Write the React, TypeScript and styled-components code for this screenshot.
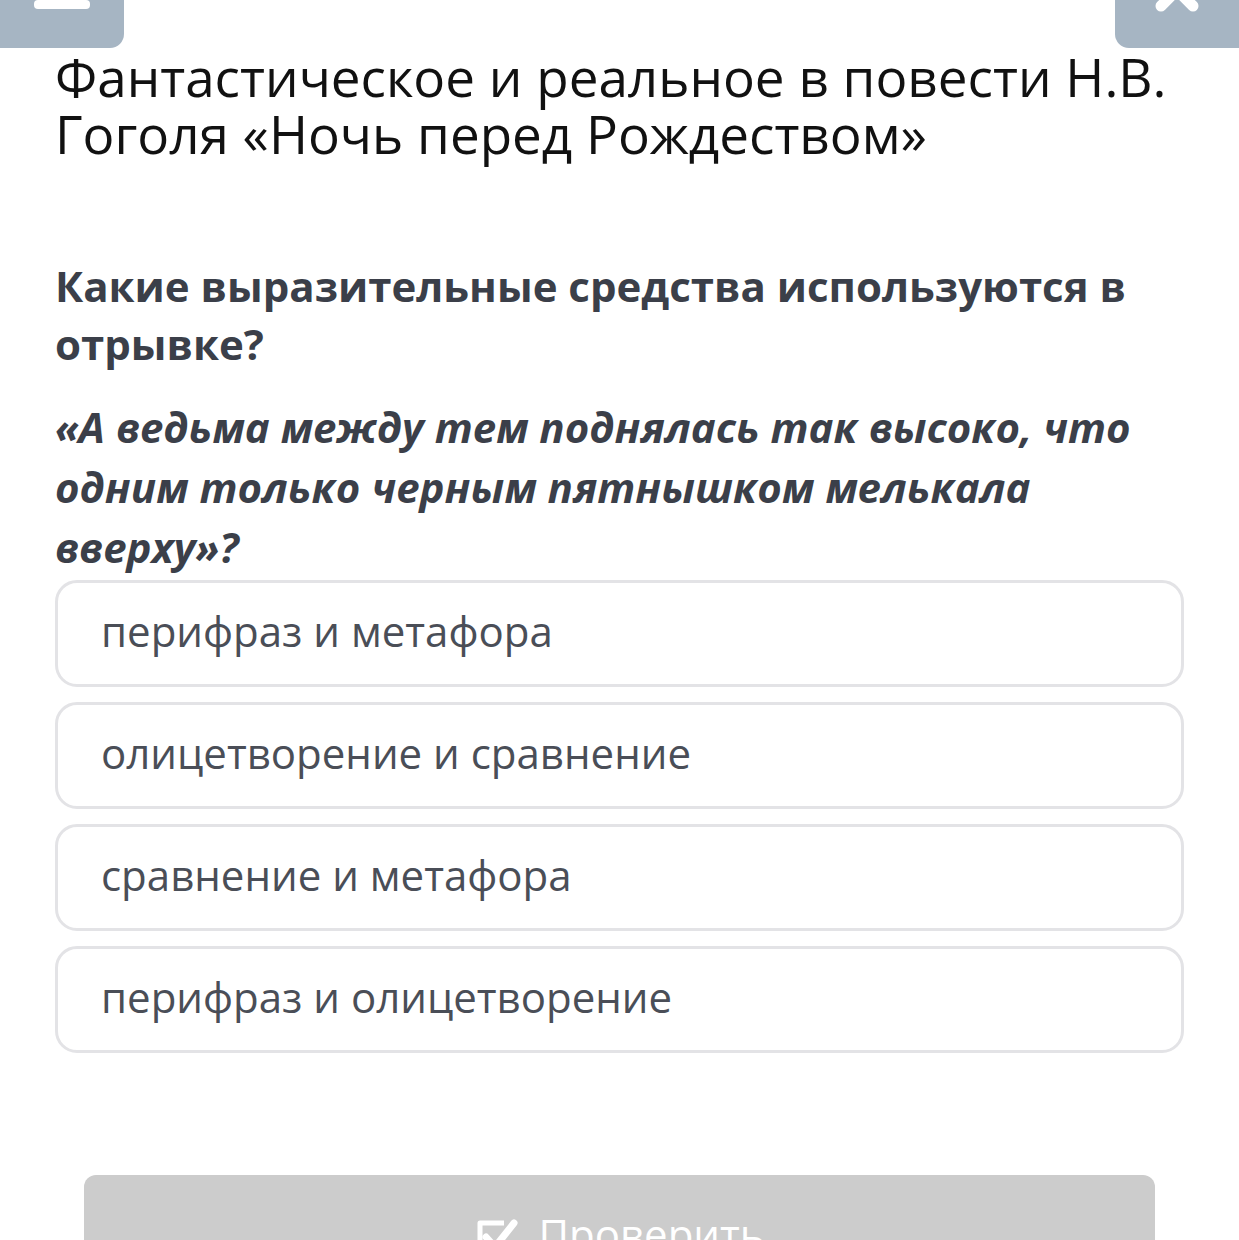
import styled, { createGlobalStyle } from "styled-components";

const GlobalStyle = createGlobalStyle`
  html, body {
    margin: 0;
    padding: 0;
    background: #ffffff;
    font-family: "Open Sans", "Noto Sans", sans-serif;
  }
  * { box-sizing: border-box; }
`;

const Page = styled.div`
  width: 1239px;
  min-height: 1240px;
  overflow: hidden;
`;

const TopBar = styled.div`
  height: 48px;
  display: flex;
  justify-content: space-between;
  align-items: flex-end;
  overflow: hidden;
`;

const BarButton = styled.button<{ side: "left" | "right" }>`
  width: 124px;
  height: 100px;
  flex-shrink: 0;
  border: none;
  padding: 0 0 ${p => (p.side === "left" ? "39px" : "36px")};
  background: #a6b5c3;
  border-radius: ${p => (p.side === "left" ? "0 0 14px 0" : "0 0 0 14px")};
  display: flex;
  flex-direction: column;
  justify-content: flex-end;
  align-items: center;
  gap: 10px;
`;

const BurgerLine = styled.span`
  display: block;
  width: 56px;
  height: 9px;
  border-radius: 4px;
  background: #ffffff;
`;

const Content = styled.main`
  padding: 0 55px;
  display: flex;
  flex-direction: column;
`;

const Title = styled.h1`
  margin: 0;
  font-size: 53px;
  line-height: 57px;
  font-weight: 400;
  color: #111111;
`;

const Question = styled.h2`
  margin: 95px 0 0;
  font-size: 42px;
  line-height: 58px;
  font-weight: 700;
  color: #3b3f49;
`;

const Quote = styled.p`
  margin: 24px 0 0;
  font-size: 42px;
  line-height: 60px;
  font-weight: 700;
  font-style: italic;
  color: #3b3f49;
`;

const Options = styled.div`
  margin-top: 3px;
  display: flex;
  flex-direction: column;
  gap: 15px;
`;

const Option = styled.div`
  height: 107px;
  border: 3px solid #e3e3e6;
  border-radius: 22px;
  padding: 0 0 6px 43px;
  display: flex;
  align-items: center;
  font-size: 42px;
  line-height: 54px;
  color: #4a4e57;
`;

const CheckButton = styled.button`
  margin: 122px 29px 0;
  height: 110px;
  border: none;
  border-radius: 12px;
  background: #cccccc;
  color: #ffffff;
  font-family: "Open Sans", "Noto Sans", sans-serif;
  font-size: 42px;
  display: flex;
  justify-content: center;
  align-items: flex-start;
  gap: 18px;
  padding-top: 30px;
`;

const options = [
  "перифраз и метафора",
  "олицетворение и сравнение",
  "сравнение и метафора",
  "перифраз и олицетворение",
];

const CloseIcon = () => (
  <svg width="44" height="44" viewBox="0 0 44 44">
    <path d="M6 6 L38 38 M38 6 L6 38" stroke="#ffffff" strokeWidth="11" strokeLinecap="round" />
  </svg>
);

const CheckSquareIcon = () => (
  <svg width="46" height="46" viewBox="0 0 46 46" style={{ marginTop: 12 }}>
    <path d="M30 6 H6 V40 H38 V26" fill="none" stroke="#ffffff" strokeWidth="5" strokeLinejoin="round" />
    <path d="M12 20 L21 30 L40 6" fill="none" stroke="#ffffff" strokeWidth="7" strokeLinecap="round" strokeLinejoin="round" />
  </svg>
);

const App = () => {
  return (
    <>
      <GlobalStyle />
      <Page>
        <TopBar>
          <BarButton side="left">
            <BurgerLine />
            <BurgerLine />
            <BurgerLine />
          </BarButton>
          <BarButton side="right">
            <CloseIcon />
          </BarButton>
        </TopBar>
        <Content>
          <Title>Фантастическое и реальное в повести Н.В. Гоголя «Ночь перед Рождеством»</Title>
          <Question>Какие выразительные средства используются в отрывке?</Question>
          <Quote>«А ведьма между тем поднялась так высоко, что одним только черным пятнышком мелькала вверху»?</Quote>
          <Options>
            {options.map(o => (
              <Option key={o}>{o}</Option>
            ))}
          </Options>
          <CheckButton>
            <CheckSquareIcon />
            Проверить
          </CheckButton>
        </Content>
      </Page>
    </>
  );
};

export default App;
